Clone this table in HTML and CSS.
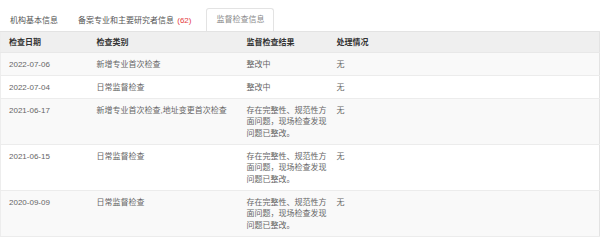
FILE: index.html
```html
<!DOCTYPE html>
<html lang="zh-CN">
<head>
<meta charset="utf-8">
<title>监督检查信息</title>
<link rel="stylesheet" href="styles.css">
</head>
<body>
<div class="panel">
  <ul class="tabs">
    <li class="tab">机构基本信息</li>
    <li class="tab">备案专业和主要研究者信息 <span class="count">(62)</span></li>
    <li class="tab active">监督检查信息</li>
  </ul>
  <table class="grid">
    <colgroup>
      <col class="c1"><col class="c2"><col class="c3"><col class="c4">
    </colgroup>
    <thead>
      <tr><th>检查日期</th><th>检查类别</th><th>监督检查结果</th><th>处理情况</th></tr>
    </thead>
    <tbody>
      <tr class="odd"><td>2022-07-06</td><td>新增专业首次检查</td><td>整改中</td><td>无</td></tr>
      <tr><td>2022-07-04</td><td>日常监督检查</td><td>整改中</td><td>无</td></tr>
      <tr class="odd"><td>2021-06-17</td><td>新增专业首次检查,地址变更首次检查</td><td>存在完整性、规范性方面问题，现场检查发现问题已整改。</td><td>无</td></tr>
      <tr><td>2021-06-15</td><td>日常监督检查</td><td>存在完整性、规范性方面问题，现场检查发现问题已整改。</td><td>无</td></tr>
      <tr class="odd"><td>2020-09-09</td><td>日常监督检查</td><td>存在完整性、规范性方面问题，现场检查发现问题已整改。</td><td>无</td></tr>
    </tbody>
  </table>
</div>
</body>
</html>
```
FILE: styles.css
```css
html, body {
  margin: 0;
  padding: 0;
  background: #ffffff;
}
body {
  font-family: "Liberation Sans", "Noto Sans CJK SC", sans-serif;
  font-size: 8px;
  color: #666666;
}
.panel {
  padding-top: 8px;
}
.tabs {
  list-style: none;
  margin: 0;
  padding: 0;
  display: flex;
  align-items: flex-end;
}
.tab {
  height: 21px;
  line-height: 21px;
  padding: 0 9px;
  border: 1px solid transparent;
  border-bottom: 0;
  color: #555555;
}
.count {
  color: #e4393c;
  margin-left: 1px;
}
.tab.active {
  margin-left: 5px;
  border-color: #e3e3e3;
  border-radius: 3px 3px 0 0;
  background: #ffffff;
  color: #8a8a8a;
  height: 22px;
}
.grid {
  width: 600px;
  border-collapse: collapse;
  table-layout: fixed;
  border-left: 1px solid #ededed;
  border-right: 1px solid #e3e3e3;
}
.c1 { width: 88px; }
.c2 { width: 150px; }
.c3 { width: 90px; }
.c4 { width: auto; }
.grid th {
  background: #efefef;
  color: #333333;
  font-weight: bold;
  text-align: left;
  line-height: 11px;
  padding: 5px 0 4px 8px;
  border-top: 1px solid #e3e3e3;
  border-bottom: 1px solid #e8e8e8;
}
.grid td {
  line-height: 11.5px;
  padding: 5.5px 0 5px 8px;
  vertical-align: top;
  border-bottom: 1px solid #ececec;
  color: #666666;
}
.grid tr.odd td {
  background: #f9f9f9;
}
```
